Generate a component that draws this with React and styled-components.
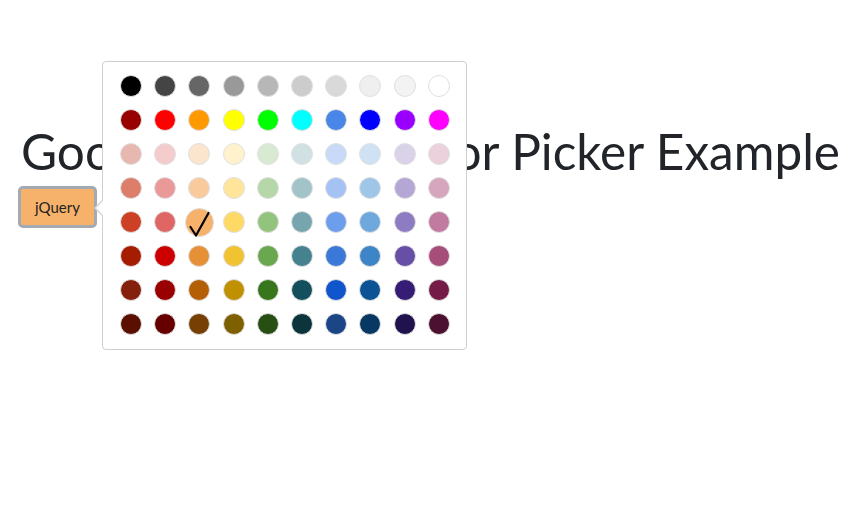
import styled, { createGlobalStyle } from "styled-components";

const palette = [
  ["#000000", "#444444", "#666666", "#999999", "#b7b7b7", "#cccccc", "#d9d9d9", "#efefef", "#f3f3f3", "#ffffff"],
  ["#980000", "#ff0000", "#ff9900", "#ffff00", "#00ff00", "#00ffff", "#4a86e8", "#0000ff", "#9900ff", "#ff00ff"],
  ["#e6b8af", "#f4cccc", "#fce5cd", "#fff2cc", "#d9ead3", "#d0e0e3", "#c9daf8", "#cfe2f3", "#d9d2e9", "#ead1dc"],
  ["#dd7e6b", "#ea9999", "#f9cb9c", "#ffe599", "#b6d7a8", "#a2c4c9", "#a4c2f4", "#9fc5e8", "#b4a7d6", "#d5a6bd"],
  ["#cc4125", "#e06666", "#f6b26b", "#ffd966", "#93c47d", "#76a5af", "#6d9eeb", "#6fa8dc", "#8e7cc3", "#c27ba0"],
  ["#a61c00", "#cc0000", "#e69138", "#f1c232", "#6aa84f", "#45818e", "#3c78d8", "#3d85c6", "#674ea7", "#a64d79"],
  ["#85200c", "#990000", "#b45f06", "#bf9000", "#38761d", "#134f5c", "#1155cc", "#0b5394", "#351c75", "#741b47"],
  ["#5b0f00", "#660000", "#783f04", "#7f6000", "#274e13", "#0c343d", "#1c4587", "#073763", "#20124d", "#4c1130"],
];

const selected = "#f6b26b";

const CheckIcon = () => (
  <svg width="29" height="29" viewBox="0 0 29 29">
    <path
      d="M5.5 19 L11 27.5 L23.5 5"
      fill="none"
      stroke="#000"
      strokeWidth="2.2"
      strokeLinecap="round"
      strokeLinejoin="round"
    />
  </svg>
);

const App = () => {
  return (
    <>
      <GlobalStyle />
      <Page>
        <Title>Google Material Color Picker Example</Title>
        <PickerWrap>
          <Trigger $color={selected}>jQuery</Trigger>
          <Popover>
            <Grid>
              {palette.flat().map((c) => (
                <Cell key={c}>
                  <Swatch $color={c} $active={c === selected}>
                    {c === selected && <CheckIcon />}
                  </Swatch>
                </Cell>
              ))}
            </Grid>
          </Popover>
        </PickerWrap>
      </Page>
    </>
  );
};

export default App;

const GlobalStyle = createGlobalStyle`
  body {
    margin: 0;
    background: #fff;
    font-family: Lato, "Open Sans", sans-serif;
    color: #212529;
  }
`;

const Page = styled.div`
  min-height: 100vh;
  box-sizing: border-box;
  padding: 121px 0 0 21px;
  overflow: hidden;
`;

const Title = styled.h1`
  margin: 0 0 5px;
  font-size: 49.5px;
  font-weight: 400;
  line-height: 60px;
  white-space: nowrap;
`;

const PickerWrap = styled.div`
  position: relative;
  margin-left: -3px;
`;

const Trigger = styled.button`
  width: 79px;
  height: 42px;
  padding: 0;
  border: 3px solid #a3aab1;
  border-radius: 5px;
  background: ${({ $color }) => $color};
  font-family: Lato, sans-serif;
  font-size: 15px;
  color: #222;
`;

const Popover = styled.div`
  position: absolute;
  left: 84px;
  top: -125px;
  width: 329px;
  padding: 13px 17px 14px;
  background: #fff;
  border: 1px solid #cfcfcf;
  border-radius: 4px;

  &::before,
  &::after {
    content: "";
    position: absolute;
    top: 137px;
    border-style: solid;
    border-color: transparent;
  }
  &::before {
    left: -9px;
    border-width: 9px 9px 9px 0;
    border-right-color: #d4d4d4;
  }
  &::after {
    left: -7px;
    top: 138px;
    border-width: 8px 8px 8px 0;
    border-right-color: #fff;
  }
`;

const Grid = styled.div`
  display: grid;
  grid-template-columns: repeat(10, 22px);
  grid-auto-rows: 22px;
  column-gap: 12.2px;
  row-gap: 12px;
`;

const Cell = styled.div`
  display: flex;
  align-items: center;
  justify-content: center;
`;

const Swatch = styled.div`
  flex: none;
  width: ${({ $active }) => ($active ? "29px" : "22px")};
  height: ${({ $active }) => ($active ? "29px" : "22px")};
  box-sizing: border-box;
  border-radius: 50%;
  background: ${({ $color }) => $color};
  border: 1px solid #e0e0e0;

  svg {
    display: block;
    margin: -1px;
  }
`;
